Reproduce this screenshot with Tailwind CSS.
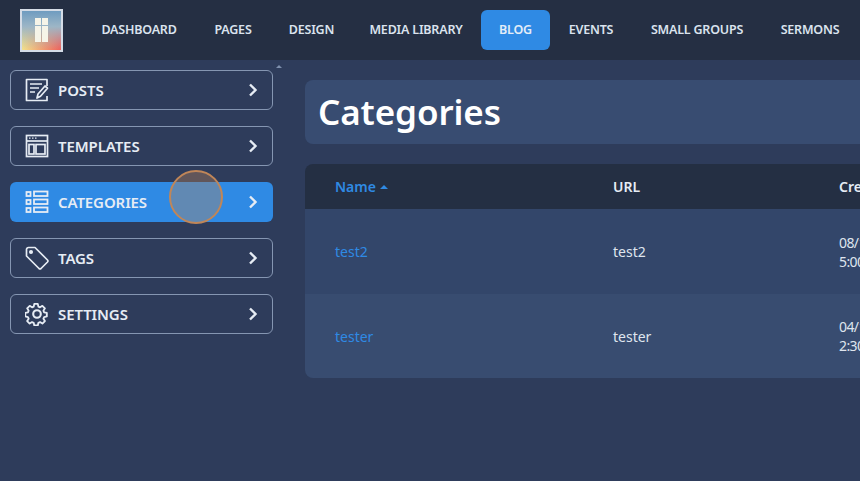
<!DOCTYPE html>
<html lang="en">
<head>
    <meta charset="UTF-8">
    <title>Categories</title>
    <script src="https://cdn.jsdelivr.net/npm/@tailwindcss/browser@4"></script>
</head>
<body class="bg-[#2e3c5b] h-[481px] w-[860px] overflow-hidden relative font-['Noto_Sans',sans-serif] text-white">

<!-- Top nav -->
<div class="h-[60px] bg-[#252f43] flex items-center pl-5 whitespace-nowrap">
    <div class="w-[43px] h-[43px] shrink-0 border-2 border-[#d5dce6] bg-[linear-gradient(180deg,#6f9cc0_0%,#9db6c6_40%,transparent_100%),linear-gradient(90deg,#f4e28a,#f0605a)] flex items-center justify-center">
        <svg width="13" height="24" viewBox="0 0 13 24" fill="#f6f4e8"><rect x="0" y="0" width="6" height="7"/><rect x="7" y="0" width="6" height="7"/><rect x="0" y="8" width="6" height="16"/><rect x="7" y="8" width="6" height="16"/></svg>
    </div>
    <nav class="flex items-center ml-5 text-[12.5px] font-semibold text-[#dbe3ee] tracking-[-0.2px]">
        <a class="w-[112px] text-center">DASHBOARD</a>
        <a class="w-[76px] text-center">PAGES</a>
        <a class="w-[81px] text-center">DESIGN</a>
        <a class="w-[128px] text-center">MEDIA LIBRARY</a>
        <a class="w-[69px] h-10 ml-[1px] flex items-center justify-center rounded-md bg-[#2f8ae4] text-[#e3edf8]">BLOG</a>
        <a class="w-[82px] text-center">EVENTS</a>
        <a class="w-[130px] text-center">SMALL GROUPS</a>
        <a class="w-[96px] text-center">SERMONS</a>
    </nav>
</div>

<div class="flex">
    <!-- Sidebar -->
    <aside class="w-[263px] ml-[10px] pt-[10px] shrink-0 flex flex-col gap-4 text-[15px] font-semibold text-[#e6ecf4] tracking-[-0.1px]">
        <a class="h-10 flex items-center pl-[14px] pr-[13px] rounded-md border border-[#8596b2]">
            <svg class="w-6 h-6 mr-[9px] shrink-0" viewBox="0 0 24 24" fill="none" stroke="currentColor" stroke-width="1.7" stroke-linejoin="round"><path d="M22 8V1.500H1.500v21H22V18"/><path d="M5 6h12M5 10h9M5 14h5"/><path d="M12 20l1-4 7-8 2.500 2.200-7 8z"/></svg>
            <span>POSTS</span>
            <svg class="ml-auto w-3 h-4" viewBox="0 0 12 16" fill="none" stroke="currentColor" stroke-width="2.4"><path d="M3 2.500l5.500 5.500-5.500 5.500"/></svg>
        </a>
        <a class="h-10 flex items-center pl-[14px] pr-[13px] rounded-md border border-[#8596b2]">
            <svg class="w-6 h-6 mr-[9px] shrink-0" viewBox="0 0 24 24" fill="none" stroke="currentColor" stroke-width="1.7"><rect x="1.500" y="1.500" width="21" height="21"/><path d="M1.500 7h21"/><path d="M4 4.200h1.500M7 4.200h1.500M10 4.200h1.500" stroke-width="1.300"/><rect x="4" y="10.500" width="5" height="9.500"/><rect x="11" y="10.500" width="9" height="9.500"/></svg>
            <span>TEMPLATES</span>
            <svg class="ml-auto w-3 h-4" viewBox="0 0 12 16" fill="none" stroke="currentColor" stroke-width="2.4"><path d="M3 2.500l5.500 5.500-5.500 5.500"/></svg>
        </a>
        <a class="h-10 flex items-center pl-[15px] pr-[14px] rounded-md bg-[#2f8ae4]">
            <svg class="w-6 h-6 mr-[9px] shrink-0" viewBox="0 0 24 24" fill="none" stroke="currentColor" stroke-width="1.800"><rect x="1.500" y="2" width="4" height="4"/><rect x="1.500" y="10" width="4" height="4"/><rect x="1.500" y="18" width="4" height="4"/><rect x="9" y="1.500" width="13.500" height="4.500"/><rect x="9" y="9.500" width="13.500" height="4.500"/><rect x="9" y="17.500" width="13.500" height="4.500"/></svg>
            <span>CATEGORIES</span>
            <svg class="ml-auto w-3 h-4" viewBox="0 0 12 16" fill="none" stroke="currentColor" stroke-width="2.4"><path d="M3 2.500l5.500 5.500-5.500 5.500"/></svg>
        </a>
        <a class="h-10 flex items-center pl-[14px] pr-[13px] rounded-md border border-[#8596b2]">
            <svg class="w-6 h-6 mr-[9px] shrink-0" viewBox="0 0 24 24" fill="none" stroke="currentColor" stroke-width="1.700" stroke-linejoin="round"><path d="M1.500 3.500a2 2 0 0 1 2-2h6.500l12.500 12.500a1.500 1.500 0 0 1 0 2l-6.500 6.500a1.500 1.500 0 0 1-2 0L1.500 10z"/><circle cx="6" cy="6" r="1.200" fill="currentColor"/></svg>
            <span>TAGS</span>
            <svg class="ml-auto w-3 h-4" viewBox="0 0 12 16" fill="none" stroke="currentColor" stroke-width="2.4"><path d="M3 2.500l5.500 5.500-5.500 5.500"/></svg>
        </a>
        <a class="h-10 flex items-center pl-[14px] pr-[13px] rounded-md border border-[#8596b2]">
            <svg class="w-6 h-6 mr-[9px] shrink-0" viewBox="0 0 24 24" fill="none" stroke="currentColor" stroke-width="2.100" stroke-linejoin="round"><circle cx="12" cy="12" r="3.800"/><path d="M10 1.500h4l.7 3.100 1.900.8 2.700-1.700 2.900 2.900-1.700 2.700.8 1.900 3.100.7v4l-3.100.7-.8 1.900 1.700 2.700-2.900 2.900-2.700-1.700-1.900.8-.7 3.100h-4l-.7-3.100-1.900-.8-2.700 1.700-2.900-2.900 1.700-2.700-.8-1.900-3.100-.7v-4l3.100-.7.8-1.900-1.700-2.700 2.900-2.900 2.700 1.700 1.900-.8z" transform="translate(.6 .6) scale(.87)"/></svg>
            <span>SETTINGS</span>
            <svg class="ml-auto w-3 h-4" viewBox="0 0 12 16" fill="none" stroke="currentColor" stroke-width="2.4"><path d="M3 2.500l5.500 5.500-5.500 5.500"/></svg>
        </a>
    </aside>

    <!-- Main -->
    <main class="ml-8 w-[600px] shrink-0 pt-5">
        <div class="h-[64px] rounded-l-lg bg-[#384c71] flex items-center pl-[13px]">
            <h1 class="text-[35px] font-semibold tracking-[-0.1px]">Categories</h1>
        </div>
        <div class="mt-5 rounded-l-lg overflow-hidden text-[14px]">
            <div class="h-[45px] bg-[#242f43] grid grid-cols-[278px_226px_1fr] pl-[30px] items-center font-semibold whitespace-nowrap">
                <div class="text-[#2f8ae4] flex items-center gap-1">Name <span class="w-0 h-0 border-x-4 border-x-transparent border-b-4 border-b-[#2f8ae4]"></span></div>
                <div class="text-[#e6ecf4]">URL</div>
                <div class="text-[#e6ecf4]">Created</div>
            </div>
            <div class="h-[85px] bg-[#33466a] grid grid-cols-[278px_226px_1fr] pl-[30px] items-center leading-[19px] whitespace-nowrap">
                <a class="text-[#2f8ae4]">test2</a>
                <div class="text-[#dfe5ee]">test2</div>
                <div class="text-[#dfe5ee] tracking-[-0.6px]">08/14/2023<br>5:00 PM</div>
            </div>
            <div class="h-[84px] bg-[#384c70] grid grid-cols-[278px_226px_1fr] pl-[30px] items-center leading-[19px] whitespace-nowrap">
                <a class="text-[#2f8ae4]">tester</a>
                <div class="text-[#dfe5ee]">tester</div>
                <div class="text-[#dfe5ee] tracking-[-0.6px]">04/11/2023<br>2:30 PM</div>
            </div>
        </div>
    </main>
</div>

<!-- scroll arrow -->
<div class="absolute left-[276px] top-[65px] w-0 h-0 border-x-[3px] border-x-transparent border-b-[3px] border-b-[#7f90ad]"></div>
<!-- click highlight -->
<div class="absolute left-[169px] top-[170px] w-[54px] h-[54px] rounded-full border-2 border-[#c08658] bg-[#c08658]/35"></div>

</body>
</html>
